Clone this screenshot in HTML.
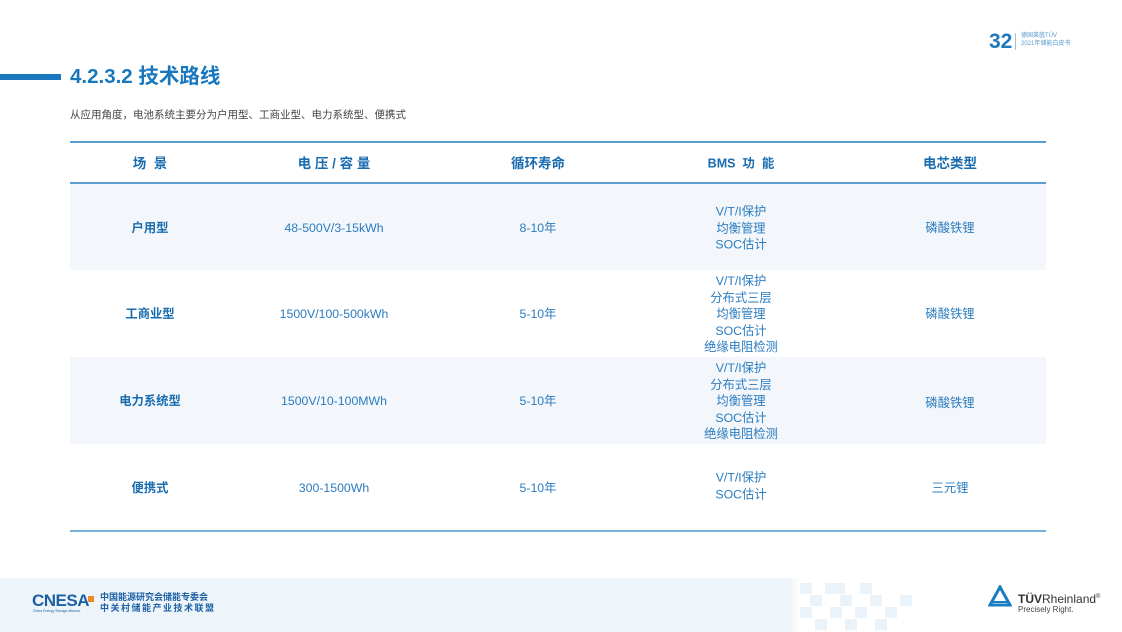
<!DOCTYPE html>
<html><head><meta charset="utf-8"><style>
body{margin:0;width:1122px;height:632px;position:relative;background:#fff;font-family:"Liberation Sans","Noto Sans CJK SC",sans-serif;overflow:hidden}
.a{position:absolute}
.c{position:absolute;text-align:center;color:#2b7cc0;font-size:12.3px;line-height:16.5px;transform:translate(-50%,-50%);white-space:nowrap}
.h{position:absolute;text-align:center;color:#1a6cb0;font-size:13.5px;font-weight:bold;transform:translate(-50%,-50%);white-space:nowrap}
.b{font-weight:bold;color:#1a6cb0}
.sq{position:absolute;width:12px;height:11px;background:#eaf3f9}
</style></head><body>
<div class="a" style="left:989px;top:30px;font-size:21px;color:#1f78bd;font-weight:bold;line-height:24px">32</div>
<div class="a" style="left:1015px;top:33px;width:1px;height:17px;background:#9bbfdd"></div>
<div class="a" style="left:1021px;top:32px;font-size:6px;line-height:8px;color:#5a9acb">德国莱茵TÜV<br>2021年储能白皮书</div>

<div class="a" style="left:0;top:74px;width:61px;height:6px;background:#1877bd"></div>
<div class="a" style="left:70px;top:64px;font-size:20.5px;font-weight:bold;color:#1877bd;line-height:26px">4.2.3.2 技术路线</div>
<div class="a" style="left:70px;top:108px;font-size:10.5px;color:#444;line-height:14px">从应用角度，电池系统主要分为户用型、工商业型、电力系统型、便携式</div>

<div class="a" style="left:70px;top:183px;width:976px;height:87px;background:#f3f7fb"></div>
<div class="a" style="left:70px;top:357px;width:976px;height:87px;background:#f3f7fb"></div>
<div class="a" style="left:70px;top:141px;width:976px;height:1.5px;background:#5b9ccf"></div>
<div class="a" style="left:70px;top:182px;width:976px;height:1.5px;background:#5b9ccf"></div>
<div class="a" style="left:70px;top:530px;width:976px;height:1.5px;background:#7aafd8"></div>

<div class="h" style="left:150px;top:162px">场&nbsp;&nbsp;景</div>
<div class="h" style="left:334px;top:162px">电 压 / 容 量</div>
<div class="h" style="left:538px;top:162px">循环寿命</div>
<div class="h" style="left:741px;top:162px;font-size:12.5px">BMS&nbsp;&nbsp;功&nbsp;&nbsp;能</div>
<div class="h" style="left:950px;top:162px">电芯类型</div>

<div class="c b" style="left:150px;top:228px">户用型</div>
<div class="c" style="left:334px;top:228px">48-500V/3-15kWh</div>
<div class="c" style="left:538px;top:228px">8-10年</div>
<div class="c" style="left:741px;top:228px">V/T/I保护<br>均衡管理<br>SOC估计</div>
<div class="c" style="left:950px;top:228px">磷酸铁锂</div>

<div class="c b" style="left:150px;top:314px">工商业型</div>
<div class="c" style="left:334px;top:314px">1500V/100-500kWh</div>
<div class="c" style="left:538px;top:314px">5-10年</div>
<div class="c" style="left:741px;top:314px">V/T/I保护<br>分布式三层<br>均衡管理<br>SOC估计<br>绝缘电阻检测</div>
<div class="c" style="left:950px;top:314px">磷酸铁锂</div>

<div class="c b" style="left:150px;top:401px">电力系统型</div>
<div class="c" style="left:334px;top:401px">1500V/10-100MWh</div>
<div class="c" style="left:538px;top:401px">5-10年</div>
<div class="c" style="left:741px;top:401px">V/T/I保护<br>分布式三层<br>均衡管理<br>SOC估计<br>绝缘电阻检测</div>
<div class="c" style="left:950px;top:403px">磷酸铁锂</div>

<div class="c b" style="left:150px;top:488px">便携式</div>
<div class="c" style="left:334px;top:488px">300-1500Wh</div>
<div class="c" style="left:538px;top:488px">5-10年</div>
<div class="c" style="left:741px;top:486px">V/T/I保护<br>SOC估计</div>
<div class="c" style="left:950px;top:488px">三元锂</div>

<div class="a" style="left:0;top:578px;width:800px;height:54px;background:linear-gradient(90deg,#eef5fa 0,#eef5fa 790px,#fff 800px)"></div>
<div class="sq" style="left:800px;top:583px"></div><div class="sq" style="left:825px;top:583px;width:20px"></div><div class="sq" style="left:860px;top:583px"></div>
<div class="sq" style="left:810px;top:595px"></div><div class="sq" style="left:840px;top:595px"></div><div class="sq" style="left:870px;top:595px"></div><div class="sq" style="left:900px;top:595px"></div>
<div class="sq" style="left:800px;top:607px"></div><div class="sq" style="left:830px;top:607px"></div><div class="sq" style="left:855px;top:607px"></div><div class="sq" style="left:885px;top:607px"></div>
<div class="sq" style="left:815px;top:619px"></div><div class="sq" style="left:845px;top:619px"></div><div class="sq" style="left:875px;top:619px"></div>

<div class="a" style="left:32px;top:592px;font-size:17px;font-weight:bold;color:#1d5fa5;line-height:18px;letter-spacing:-0.5px">CNESA</div>
<div class="a" style="left:88px;top:596px;width:6px;height:6px;background:#f08a24"></div>
<div class="a" style="left:33px;top:609px;font-size:3.5px;color:#1d5fa5">China Energy Storage Alliance</div>
<div class="a" style="left:100px;top:592px;font-size:9px;color:#1d5fa5;line-height:11px;font-weight:bold">中国能源研究会储能专委会<br><span style="letter-spacing:1.5px">中关村储能产业技术联盟</span></div>

<svg class="a" style="left:988px;top:585px" width="24" height="22" viewBox="0 0 24 22"><path d="M12 2 L22 20 L2 20 Z" fill="none" stroke="#1a7cc3" stroke-width="3"/><path d="M5 17 H19" stroke="#1a7cc3" stroke-width="2"/></svg>
<div class="a" style="left:1018px;top:590px;font-size:12px;color:#333;line-height:14px"><b>TÜV</b>Rheinland<sup style="font-size:6px">®</sup></div>
<div class="a" style="left:1018px;top:605px;font-size:8px;color:#444">Precisely Right.</div>
</body></html>
